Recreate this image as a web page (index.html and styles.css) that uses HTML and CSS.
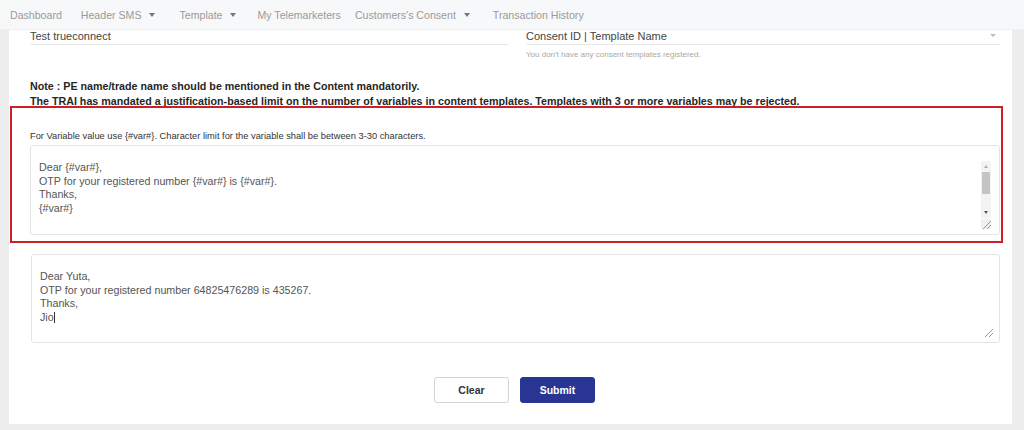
FILE: index.html
```html
<!DOCTYPE html>
<html>
<head>
<meta charset="utf-8">
<link rel="stylesheet" href="styles.css">
</head>
<body>
<nav class="nav">
  <span class="nav-item">Dashboard</span>
  <span class="nav-item caret">Header SMS</span>
  <span class="nav-item caret">Template</span>
  <span class="nav-item">My Telemarketers</span>
  <span class="nav-item caret">Customers's Consent</span>
  <span class="nav-item">Transaction History</span>
</nav>
<div class="page">
  <div class="card">
    <div class="fields">
      <div class="field f1"><div class="input">Test trueconnect</div></div>
      <div class="field f2">
        <div class="input select">Consent ID | Template Name<span class="sel-caret"></span></div>
        <div class="help">You don't have any consent templates registered.</div>
      </div>
    </div>
    <div class="notes">
      <p>Note : PE name/trade name should be mentioned in the Content mandatorily.</p>
      <p>The TRAI has mandated a justification-based limit on the number of variables in content templates. Templates with 3 or more variables may be rejected.</p>
    </div>
    <section class="template">
      <div class="highlight"></div>
      <div class="hint">For Variable value use {#var#}. Character limit for the variable shall be between 3-30 characters.</div>
      <div class="area">
        <div class="area-text">Dear {#var#},
OTP for your registered number {#var#} is {#var#}.
Thanks,
{#var#}</div>
        <div class="scrollbar">
          <span class="arrow up"></span>
          <span class="thumb"></span>
          <span class="arrow down"></span>
        </div>
        <span class="grip g1"></span>
      </div>
    </section>
    <div class="area preview">
      <div class="area-text">Dear Yuta,
OTP for your registered number 64825476289 is 435267.
Thanks,
Jio<span class="cursor"></span></div>
      <span class="grip g2"></span>
    </div>
    <div class="actions">
      <button class="btn clear">Clear</button>
      <button class="btn submit">Submit</button>
    </div>
  </div>
</div>
</body>
</html>
```
FILE: styles.css
```css
* { box-sizing: border-box; }
html, body { margin: 0; padding: 0; }
body {
  width: 1024px;
  height: 430px;
  overflow: hidden;
  background: #ededed;
  font-family: "Liberation Sans", Arial, sans-serif;
  color: #333;
}
.nav {
  height: 30px;
  background: #f7f8f9;
  display: flex;
  align-items: center;
  padding-left: 10px;
  font-size: 10.6px;
  color: #9a9a9a;
  border-bottom: 1px solid #f0f0f0;
}
.nav-item { white-space: nowrap; }
.nav-item.caret::after {
  content: "";
  display: inline-block;
  margin-left: 8px;
  vertical-align: 2px;
  border-left: 3.5px solid transparent;
  border-right: 3.5px solid transparent;
  border-top: 4px solid #777;
}
.nav-item:nth-child(1) { margin-right: 19px; }
.nav-item:nth-child(2) { margin-right: 24px; }
.nav-item:nth-child(3) { margin-right: 21px; }
.nav-item:nth-child(4) { margin-right: 14px; }
.nav-item:nth-child(5) { margin-right: 23px; }
.page {
  padding-left: 9px;
  padding-right: 12px;
  height: 394px;
}
.card {
  background: #fff;
  height: 394px;
  padding: 0 0 0 21px;
  position: relative;
}
.fields { display: flex; gap: 18px; }
.field.f1 { width: 478px; }
.field.f2 { width: 474px; }
.input {
  font-size: 11px;
  color: #444;
  height: 15px;
  line-height: 12px;
  border-bottom: 1px solid #e8e8e8;
  position: relative;
}
.sel-caret {
  position: absolute;
  right: 4px;
  top: 4px;
  border-left: 3px solid transparent;
  border-right: 3px solid transparent;
  border-top: 3px solid #bbb;
}
.help {
  font-size: 8px;
  color: #a8a8a8;
  margin-top: 5px;
}
.notes { margin-top: 20px; }
.notes p {
  margin: 0;
  font-size: 10.7px;
  font-weight: bold;
  color: #262626;
  line-height: 15px;
}
.template {
  position: relative;
  padding-top: 22px;
  padding-bottom: 9px;
  margin-left: -21px;
  padding-left: 21px;
  width: 993px;
}
.highlight {
  position: absolute;
  left: 1px;
  top: -3px;
  width: 993px;
  height: 137px;
  border: 2px solid #cc1f26;
  pointer-events: none;
}
.hint {
  font-size: 9.3px;
  color: #333;
  height: 14px;
  line-height: 10px;
}
.area {
  position: relative;
  width: 970px;
  height: 90px;
  border: 1px solid #e4e4e4;
  border-radius: 3px;
  background: #fff;
}
.area-text {
  white-space: pre;
  font-size: 10.7px;
  line-height: 13.6px;
  color: #555;
  padding: 15px 0 0 8px;
}
.scrollbar {
  position: absolute;
  right: 8px;
  top: 15px;
  width: 10px;
  height: 57px;
  background: #f3f3f3;
  display: flex;
  flex-direction: column;
  align-items: center;
}
.arrow {
  width: 0; height: 0;
  border-left: 2.5px solid transparent;
  border-right: 2.5px solid transparent;
}
.arrow.up { border-bottom: 3px solid #aaa; margin-top: 4px; }
.arrow.down { border-top: 3px solid #555; margin-top: auto; margin-bottom: 4px; }
.thumb {
  width: 8px;
  height: 22px;
  background: #c4c4c4;
  margin-top: 4px;
}
.grip {
  position: absolute;
  width: 10px;
  height: 10px;
  background: linear-gradient(135deg, transparent 55%, #999 56%, #999 62%, transparent 63%, transparent 75%, #999 76%, #999 82%, transparent 83%);
}
.grip.g1 { right: 8px; bottom: 5px; background-color: #f0f0f0; }
.grip.g2 { right: 6px; bottom: 5px; }
.preview { margin-top: 10px; margin-left: 1px; width: 969px; height: 89px; }
.preview .area-text { padding-top: 15px; }
.cursor {
  display: inline-block;
  width: 1px;
  height: 11px;
  background: #333;
  vertical-align: -2px;
}
.actions {
  display: flex;
  justify-content: center;
  gap: 11px;
  margin-top: 34px;
  padding-right: 21px;
  padding-left: 8px;
}
.btn {
  width: 75px;
  height: 26px;
  border-radius: 3px;
  font-family: "Liberation Sans", Arial, sans-serif;
  font-size: 10.5px;
  font-weight: bold;
  cursor: pointer;
}
.btn.clear { background: #fff; color: #333; border: 1px solid #d4d4d4; }
.btn.submit { background: #283593; color: #fff; border: 1px solid #283593; }
```
